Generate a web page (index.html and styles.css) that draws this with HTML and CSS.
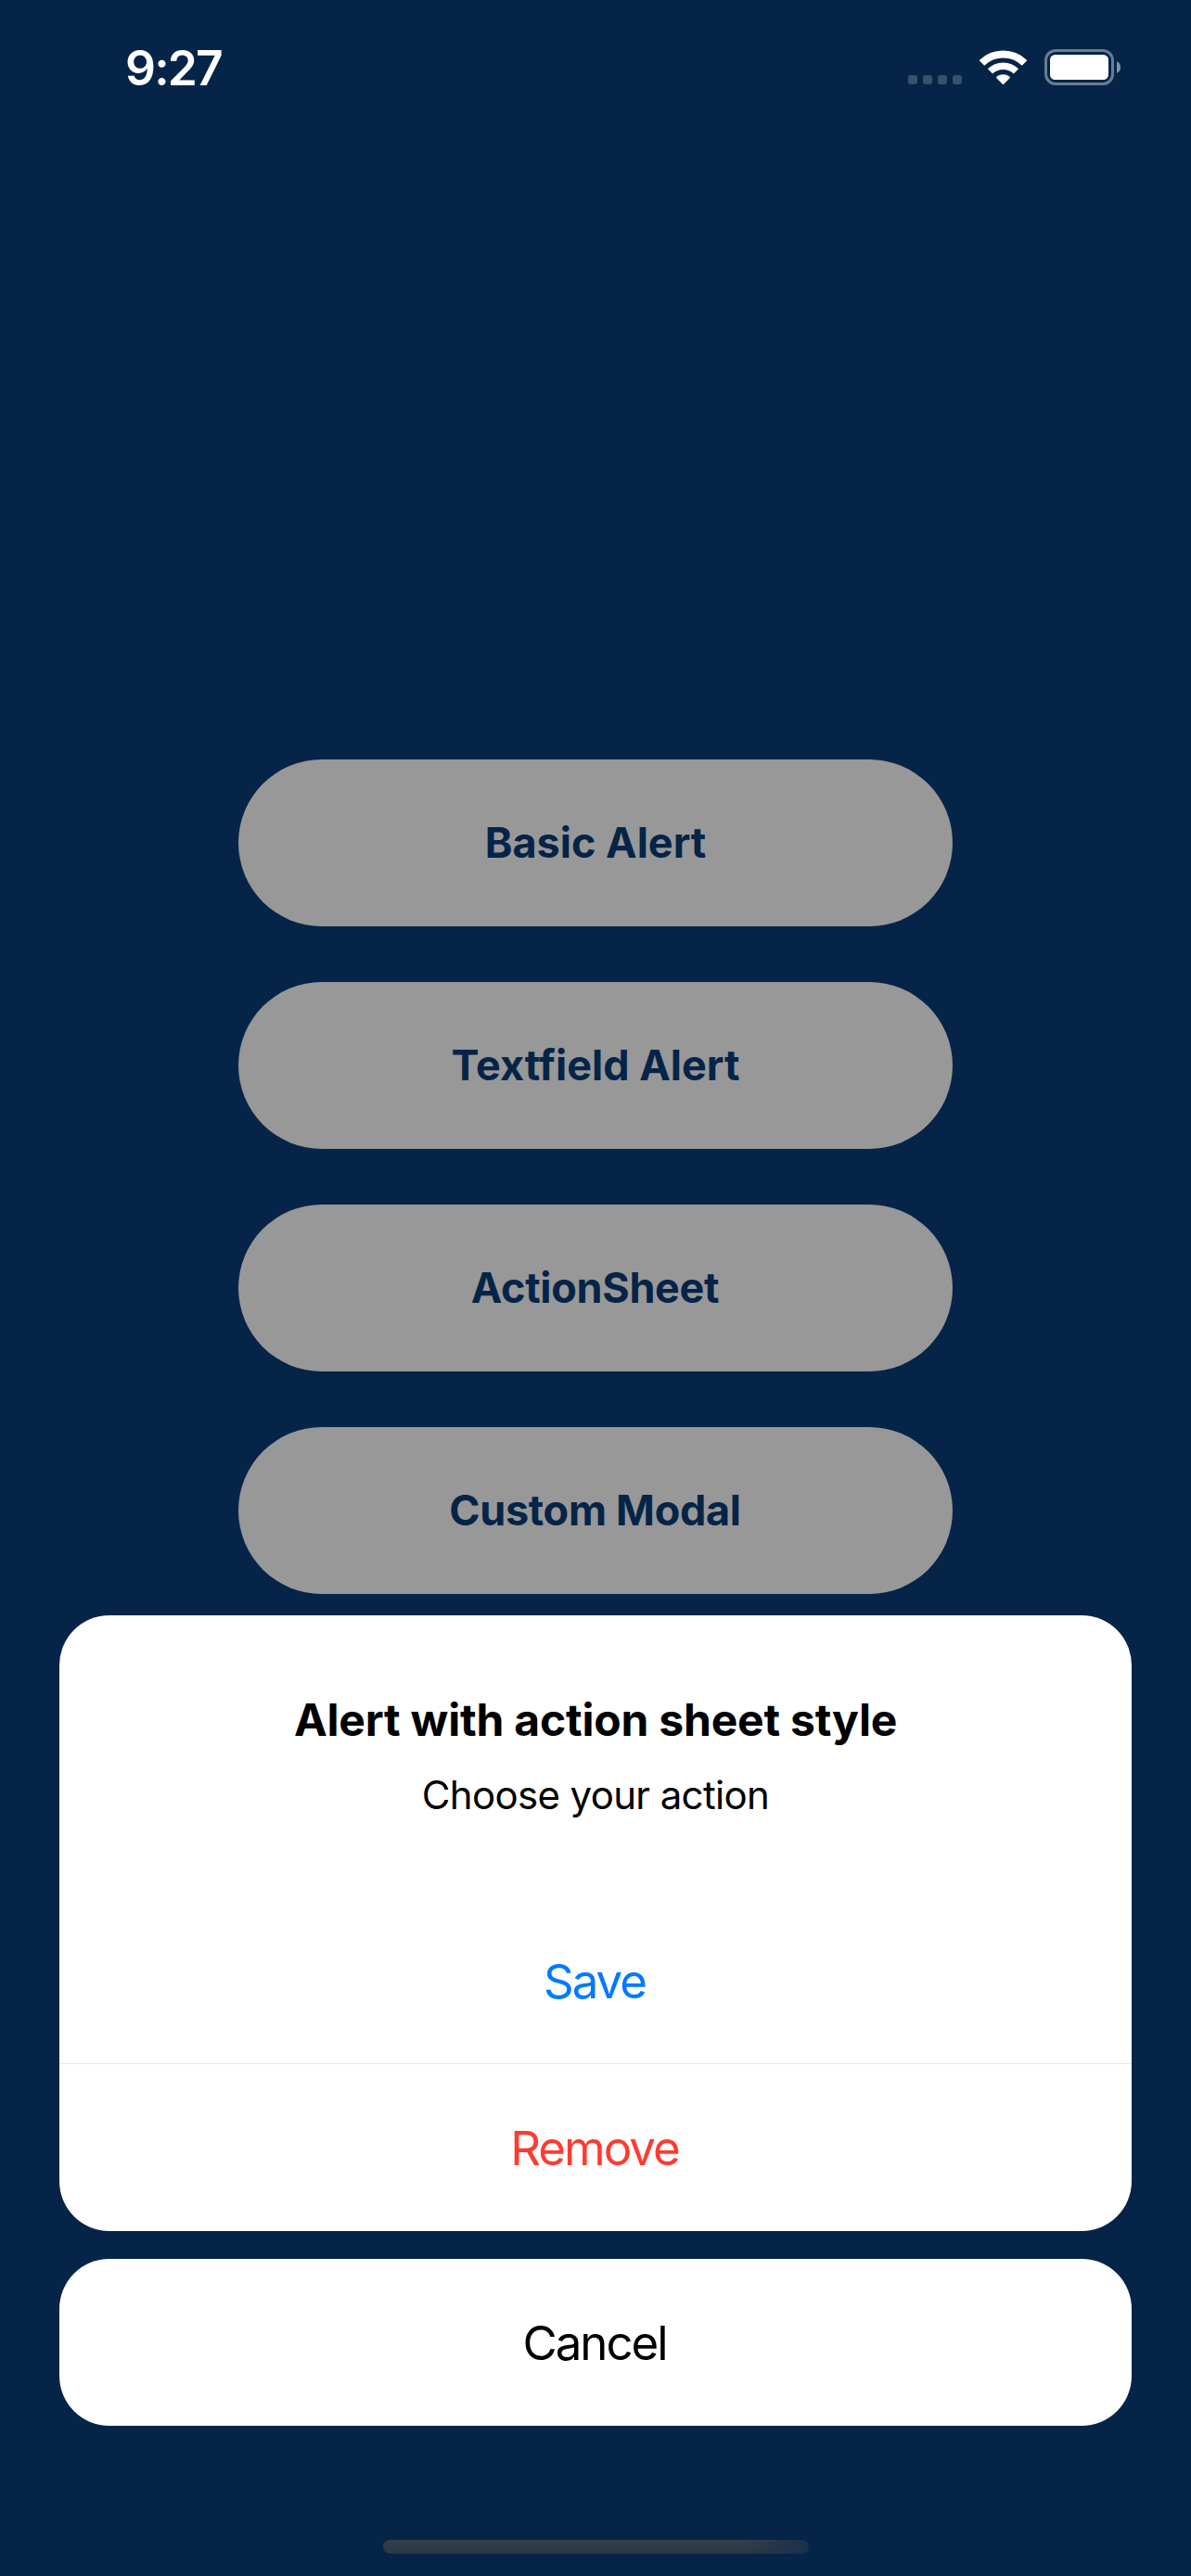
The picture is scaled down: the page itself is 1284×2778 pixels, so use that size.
FILE: index.html
```html
<!DOCTYPE html>
<html lang="en">
<head>
<meta charset="utf-8">
<title>Alerts</title>
<link rel="stylesheet" href="styles.css">
</head>
<body>
<main class="screen">
  <header class="status">
    <span class="time"><span class="label">9:27</span></span>
    <div class="indicators">
      <svg class="signal" width="58" height="10" viewBox="0 0 58 10"><g fill="#39516c"><rect width="10" height="10" rx="3"/><rect x="16" width="10" height="10" rx="3"/><rect x="32" width="10" height="10" rx="3"/><rect x="48" width="10" height="10" rx="3"/></g></svg>
      <svg class="wifi" width="51" height="38" viewBox="0 0 51 38"><g fill="none" stroke="#fff"><path stroke-width="8" d="M2.400 14A32.800 32.800 0 0 1 48.600 14"/><path stroke-width="7.500" d="M11.500 22.900A20 20 0 0 1 39.500 22.900"/></g><path fill="#fff" d="M18.400 30.300Q17.600 29.400 18.600 28.600A11.500 11.500 0 0 1 32.400 28.600Q33.400 29.400 32.600 30.300L26.200 36.700Q25.500 37.400 24.800 36.700Z"/></svg>
      <svg class="battery" width="82" height="39" viewBox="0 0 82 39"><rect x="1.500" y="1.500" width="72" height="36" rx="10.500" fill="none" stroke="#697c91" stroke-width="3"/><rect x="6" y="6" width="63" height="27" rx="5.500" fill="#fff"/><path fill="#8292a4" d="M78 13q4 2 4 6.500t-4 6.500z"/></svg>
    </div>
  </header>
  <nav class="menu">
    <button class="pill"><span class="label">Basic Alert</span></button>
    <button class="pill"><span class="label">Textfield Alert</span></button>
    <button class="pill tight"><span class="label">ActionSheet</span></button>
    <button class="pill tight"><span class="label">Custom Modal</span></button>
  </nav>
  <section class="sheet">
    <div class="heading">
      <h1 class="title"><span class="label">Alert with action sheet style</span></h1>
      <p class="message"><span class="label">Choose your action</span></p>
    </div>
    <button class="option save"><span class="label">Save</span></button>
    <button class="option remove"><span class="label">Remove</span></button>
  </section>
  <button class="option cancel"><span class="label">Cancel</span></button>
  <div class="home"></div>
</main>
</body>
</html>
```
FILE: styles.css
```css
* { box-sizing: border-box; }
body { margin: 0; }
button { border: 0; padding: 0; margin: 0; font-family: inherit; background: none; }
.screen {
  width: 1284px; height: 2778px; background: #052447;
  font-family: Inter, "Liberation Sans", sans-serif;
  display: flex; flex-direction: column; align-items: center; overflow: hidden;
}
.label { display: inline-block; white-space: nowrap; }
.status { width: 100%; height: 819px; padding: 53px 76px 0 135px; display: flex; justify-content: space-between; align-items: flex-start; flex: none; }
.time { color: #fff; font-size: 51.5px; font-weight: 600; line-height: 40px; letter-spacing: -1.8px; }
.indicators { display: flex; align-items: flex-start; height: 40px; }
.signal { margin: 28px 19px 0 0; }
.wifi { margin: 1px 19px 0 0; }
.menu { display: flex; flex-direction: column; gap: 60px; flex: none; }
.pill { width: 770px; height: 180px; border-radius: 90px; background: #989898; color: #052447; font-size: 45px; font-weight: 700; line-height: 54px; }
.tight { letter-spacing: -0.3px; padding-right: 1px; }
.sheet { width: 1156px; height: 664px; margin-top: 23px; background: #fff; border-radius: 54px; overflow: hidden; flex: none; }
.heading { height: 303px; padding-top: 84px; text-align: center; }
.title, .message { margin: 0; color: #000; }
.title { font-size: 48px; font-weight: 700; line-height: 58px; letter-spacing: -0.2px; }
.message { font-size: 42px; line-height: 50px; margin-top: 27px; letter-spacing: -0.65px; }
.option { display: block; width: 100%; height: 180px; padding-right: 2px; font-size: 51px; line-height: 60px; letter-spacing: -2px; }
.save { color: #007aff; padding-top: 3px; }
.remove { height: 181px; padding-top: 2px; color: #ff3b30; border-top: 1px solid #e5e5e5; }
.cancel { width: 1156px; margin-top: 30px; padding-top: 2px; border-radius: 54px; background: #fff; color: #000; flex: none; }
.home {
  width: 459px; height: 15px; border-radius: 8px; margin-top: 123px; flex: none;
  background: linear-gradient(90deg, transparent 84%, #1b304b), linear-gradient(#363f4a, #2a3847);
}
```
